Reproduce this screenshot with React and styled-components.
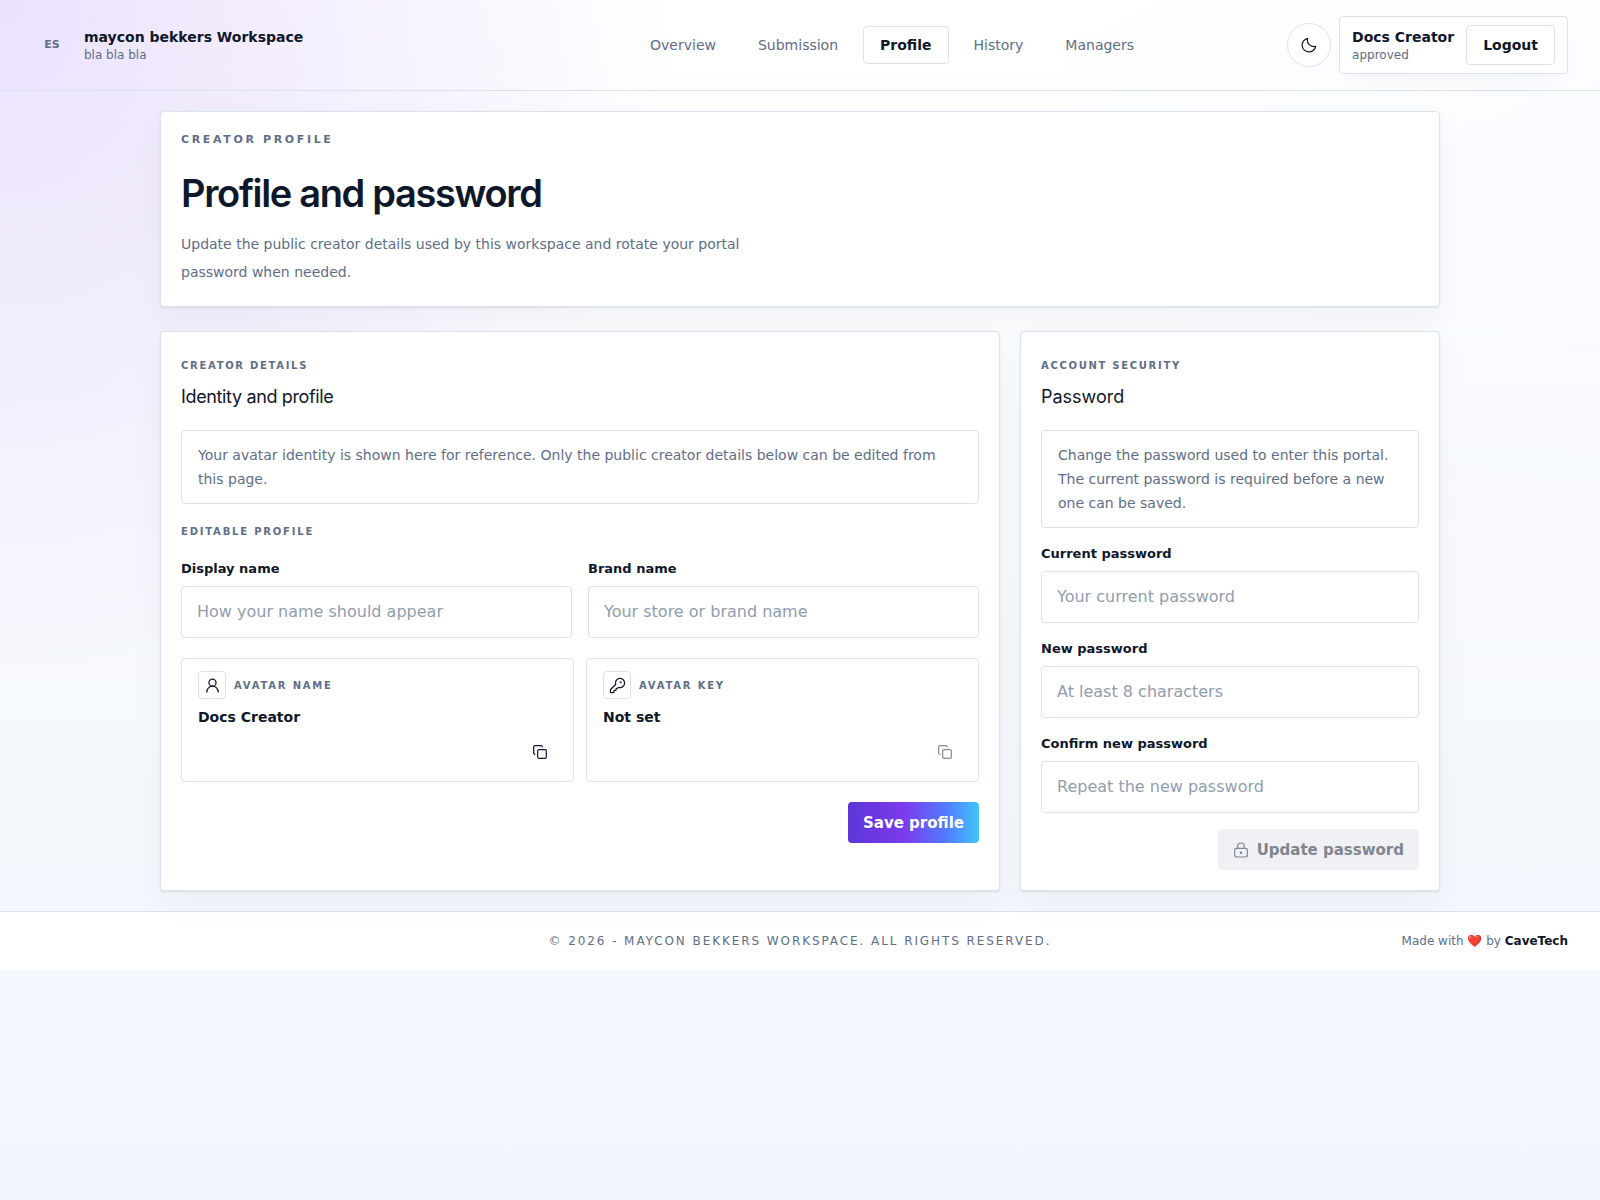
import React, { useState } from "react";
import styled, { createGlobalStyle } from "styled-components";

const GlobalStyle = createGlobalStyle`
  * {
    box-sizing: border-box;
  }
  body {
    margin: 0;
    min-height: 100vh;
    color: #0f172a;
    font-family: "DejaVu Sans", sans-serif;
    font-size: 14px;
    background:
      radial-gradient(circle at top left, rgba(124, 58, 237, 0.15), transparent 34%),
      radial-gradient(circle at top right, rgba(79, 125, 255, 0.02), transparent 30%),
      linear-gradient(180deg, #ffffff 0%, #f4f7fc 72%, #f2f5fc 100%) no-repeat;
  }
  h1, h2, p {
    margin: 0;
  }
  button, input {
    font-family: inherit;
  }
`;

const Icon = ({ size = 16, stroke = 1.8, children }) => (
  <svg
    width={size}
    height={size}
    viewBox="0 0 24 24"
    fill="none"
    stroke="currentColor"
    strokeWidth={stroke}
    strokeLinecap="round"
    strokeLinejoin="round"
    aria-hidden="true"
  >
    {children}
  </svg>
);

const MoonIcon = () => (
  <Icon size={18} stroke={1.6}>
    <path d="M20.9 13.7A9.1 9.1 0 1 1 10.3 3.1A8.5 8.5 0 0 0 20.9 13.7Z" />
  </Icon>
);

const UserIcon = () => (
  <Icon size={17}>
    <circle cx="12" cy="8" r="5" />
    <path d="M20 21a8 8 0 0 0-16 0" />
  </Icon>
);

const KeyIcon = () => (
  <Icon size={17}>
    <path d="M2.6 17.4A2 2 0 0 0 2 18.8V21a1 1 0 0 0 1 1h3a1 1 0 0 0 1-1v-1a1 1 0 0 1 1-1h1a1 1 0 0 0 1-1v-1a1 1 0 0 1 1-1h.2a2 2 0 0 0 1.4-.6l.8-.8a6.5 6.5 0 1 0-4-4z" />
    <circle cx="16.5" cy="7.5" r=".5" fill="currentColor" />
  </Icon>
);

const CopyIcon = () => (
  <Icon size={16}>
    <rect x="8.5" y="8.5" width="13" height="13" rx="2" />
    <path d="M4.5 15.5a2 2 0 0 1-2-2v-9a2 2 0 0 1 2-2h9a2 2 0 0 1 2 2" />
  </Icon>
);

const LockIcon = () => (
  <Icon size={16}>
    <rect x="2.5" y="9.5" width="19" height="13" rx="2.5" />
    <path d="M7 9.5V6.5a5 5 0 0 1 10 0v3" />
    <circle cx="12" cy="16" r="1" fill="currentColor" />
  </Icon>
);

const navItems = ["Overview", "Submission", "Profile", "History", "Managers"];

const passwordFields = [
  { id: "current", label: "Current password", placeholder: "Your current password" },
  { id: "next", label: "New password", placeholder: "At least 8 characters" },
  { id: "confirm", label: "Confirm new password", placeholder: "Repeat the new password" },
];

const Field = ({ id, label, ...rest }) => (
  <FieldBox>
    <Label htmlFor={id}>{label}</Label>
    <Input id={id} {...rest} />
  </FieldBox>
);

const AvatarCard = ({ icon, label, value, disabled }) => (
  <AvatarBox>
    <AvatarHead>
      <IconBox>{icon}</IconBox>
      <SmallCaps>{label}</SmallCaps>
    </AvatarHead>
    <AvatarValue>{value}</AvatarValue>
    <CopyButton
      type="button"
      aria-label={"Copy " + label}
      disabled={disabled}
      onClick={() => navigator.clipboard?.writeText(value)}
    >
      <CopyIcon />
    </CopyButton>
  </AvatarBox>
);

const App = () => {
  const [profile, setProfile] = useState({ display: "", brand: "" });
  const [passwords, setPasswords] = useState({ current: "", next: "", confirm: "" });

  const canUpdate =
    passwords.current !== "" &&
    passwords.next.length >= 8 &&
    passwords.next === passwords.confirm;

  const changeProfile = (e) =>
    setProfile({ ...profile, [e.target.id]: e.target.value });
  const changePassword = (e) =>
    setPasswords({ ...passwords, [e.target.id]: e.target.value });
  const submitHandler = (e) => e.preventDefault();

  return (
    <>
      <GlobalStyle />
      <Header>
        <Brand>
          <Logo>ES</Logo>
          <div>
            <StrongLine>maycon bekkers Workspace</StrongLine>
            <MutedLine>bla bla bla</MutedLine>
          </div>
        </Brand>
        <Nav>
          {navItems.map((item) => (
            <NavLink
              key={item}
              href={"#" + item.toLowerCase()}
              $active={item === "Profile"}
            >
              {item}
            </NavLink>
          ))}
        </Nav>
        <Actions>
          <ThemeButton type="button" aria-label="Dark mode">
            <MoonIcon />
          </ThemeButton>
          <Account>
            <div>
              <StrongLine>Docs Creator</StrongLine>
              <MutedLine>approved</MutedLine>
            </div>
            <LogoutButton type="button">Logout</LogoutButton>
          </Account>
        </Actions>
      </Header>

      <Main>
        <Panel>
          <Eyebrow>Creator profile</Eyebrow>
          <Title>Profile and password</Title>
          <Lead>
            Update the public creator details used by this workspace and rotate
            your portal password when needed.
          </Lead>
        </Panel>

        <Columns>
          <Panel>
            <CardLabel>Creator details</CardLabel>
            <CardTitle $tight>Identity and profile</CardTitle>
            <Form $gap={20} onSubmit={submitHandler}>
              <Notice>
                Your avatar identity is shown here for reference. Only the
                public creator details below can be edited from this page.
              </Notice>
              <SmallCaps>Editable profile</SmallCaps>
              <Pair $gap={16}>
                <Field
                  id="display"
                  label="Display name"
                  placeholder="How your name should appear"
                  value={profile.display}
                  onChange={changeProfile}
                />
                <Field
                  id="brand"
                  label="Brand name"
                  placeholder="Your store or brand name"
                  value={profile.brand}
                  onChange={changeProfile}
                />
              </Pair>
              <Pair $gap={12}>
                <AvatarCard icon={<UserIcon />} label="Avatar name" value="Docs Creator" />
                <AvatarCard icon={<KeyIcon />} label="Avatar key" value="Not set" disabled />
              </Pair>
              <SubmitButton type="submit">Save profile</SubmitButton>
            </Form>
          </Panel>

          <Panel>
            <CardLabel>Account security</CardLabel>
            <CardTitle>Password</CardTitle>
            <Form $gap={16} onSubmit={submitHandler}>
              <Notice>
                Change the password used to enter this portal. The current
                password is required before a new one can be saved.
              </Notice>
              {passwordFields.map((field) => (
                <Field
                  key={field.id}
                  type="password"
                  value={passwords[field.id]}
                  onChange={changePassword}
                  {...field}
                />
              ))}
              <SubmitButton type="submit" disabled={!canUpdate}>
                <LockIcon />
                Update password
              </SubmitButton>
            </Form>
          </Panel>
        </Columns>
      </Main>

      <Footer>
        <Copyright>© 2026 - maycon bekkers Workspace. All rights reserved.</Copyright>
        <Credit>
          Made with ❤️ by <a href="#cavetech">CaveTech</a>
        </Credit>
      </Footer>
    </>
  );
};

const Header = styled.header`
  display: flex;
  align-items: center;
  justify-content: space-between;
  padding: 16px 32px;
  border-bottom: 1px solid #d9e3f0;
`;
const Brand = styled.div`
  display: flex;
  flex: 0 1 465px;
  align-items: center;
  gap: 12px;
`;
const Logo = styled.div`
  width: 40px;
  font-size: 11px;
  font-weight: bold;
  line-height: 36px;
  text-align: center;
  color: #5e6e88;
`;
const StrongLine = styled.div`
  font-size: 14px;
  font-weight: bold;
  line-height: 20px;
  white-space: nowrap;
`;
const MutedLine = styled.div`
  font-size: 12px;
  line-height: 16px;
  color: #5e6e88;
`;
const Nav = styled.nav`
  display: flex;
  gap: 8px;
`;
const NavLink = styled.a`
  padding: 8px 16px;
  border: 1px solid ${({ $active }) => ($active ? "#d9e3f0" : "transparent")};
  border-radius: 4px;
  background: ${({ $active }) => ($active ? "#ffffff" : "transparent")};
  color: ${({ $active }) => ($active ? "#0f172a" : "#5e6e88")};
  font-weight: ${({ $active }) => ($active ? "bold" : "normal")};
  line-height: 20px;
  text-decoration: none;
`;
const Actions = styled.div`
  display: flex;
  align-items: center;
  gap: 8px;
`;
const ThemeButton = styled.button`
  display: flex;
  align-items: center;
  justify-content: center;
  width: 44px;
  height: 44px;
  padding: 0;
  border: 1px solid #d9e3f0;
  border-radius: 50%;
  background: #ffffff;
  color: #0f172a;
`;
const Account = styled.div`
  display: flex;
  align-items: center;
  gap: 12px;
  padding: 8px 12px;
  border: 1px solid #d9e3f0;
  border-radius: 4px;
  background: #ffffff;
  box-shadow: 0 12px 24px -12px rgba(15, 23, 42, 0.06);
`;
const LogoutButton = styled.button`
  height: 40px;
  padding: 0 16px;
  border: 1px solid #d9e3f0;
  border-radius: 4px;
  background: #ffffff;
  color: #0f172a;
  font-size: 14px;
  font-weight: bold;
`;

const Main = styled.main`
  display: flex;
  flex-direction: column;
  gap: 24px;
  max-width: 1280px;
  margin: 0 auto;
  padding: 20px 0;
`;
const Panel = styled.section`
  padding: 20px;
  border: 1px solid #d9e3f0;
  border-radius: 4px;
  background: #ffffff;
  box-shadow:
    0 1px 2px rgba(15, 23, 42, 0.08),
    0 12px 32px rgba(15, 23, 42, 0.04);
`;
const Eyebrow = styled.p`
  color: #5e6e88;
  font-size: 11px;
  font-weight: bold;
  letter-spacing: 0.24em;
  line-height: 16px;
  text-transform: uppercase;
`;
const Title = styled.h1`
  margin: 24px 0 16px;
  font-family: Inter, sans-serif;
  font-size: 38px;
  font-weight: 600;
  letter-spacing: -0.035em;
  line-height: 42px;
`;
const Lead = styled.p`
  max-width: 576px;
  color: #5e6e88;
  line-height: 28px;
`;
const Columns = styled.div`
  display: grid;
  grid-template-columns: 2fr 1fr;
  gap: 20px;
`;
const CardLabel = styled.p`
  color: #5e6e88;
  font-size: 10px;
  font-weight: bold;
  letter-spacing: 0.17em;
  line-height: 28px;
  text-transform: uppercase;
`;
const CardTitle = styled.h2`
  margin-bottom: 16px;
  font-family: Inter, sans-serif;
  font-size: 18px;
  font-weight: 400;
  letter-spacing: ${({ $tight }) => ($tight ? "-0.02em" : "normal")};
  line-height: 34px;
`;
const Form = styled.form`
  display: flex;
  flex-direction: column;
  gap: ${({ $gap }) => $gap}px;
`;
const Notice = styled.p`
  padding: 12px 16px;
  border: 1px solid #d9e3f0;
  border-radius: 4px;
  color: #5e6e88;
  line-height: 24px;
`;
const SmallCaps = styled.div`
  color: #5e6e88;
  font-size: 10px;
  font-weight: bold;
  letter-spacing: 0.18em;
  line-height: 15px;
  text-transform: uppercase;
`;
const Pair = styled.div`
  display: grid;
  grid-template-columns: 1fr 1fr;
  gap: ${({ $gap }) => $gap}px;
`;
const FieldBox = styled.div`
  display: flex;
  flex-direction: column;
  gap: 8px;
`;
const Label = styled.label`
  font-size: 13px;
  font-weight: bold;
  line-height: 19px;
`;
const Input = styled.input`
  width: 100%;
  height: 52px;
  padding: 0 15px 2px;
  border: 1px solid #d9e3f0;
  border-radius: 4px;
  background: #ffffff;
  color: #0f172a;
  font-size: 16px;
  &::placeholder {
    color: #919dae;
  }
`;
const AvatarBox = styled.div`
  display: flex;
  flex-direction: column;
  gap: 8px;
  padding: 12px 16px;
  border: 1px solid #d9e3f0;
  border-radius: 4px;
`;
const AvatarHead = styled.div`
  display: flex;
  align-items: center;
  gap: 8px;
`;
const IconBox = styled.span`
  display: flex;
  align-items: center;
  justify-content: center;
  width: 28px;
  height: 28px;
  border: 1px solid #d9e3f0;
  border-radius: 4px;
`;
const AvatarValue = styled.div`
  font-weight: bold;
  line-height: 20px;
`;
const CopyButton = styled.button`
  display: flex;
  align-items: center;
  justify-content: center;
  align-self: flex-end;
  width: 34px;
  height: 34px;
  padding: 0;
  border: 0;
  background: transparent;
  color: #0f172a;
  &:disabled {
    opacity: 0.5;
  }
`;
const SubmitButton = styled.button`
  display: flex;
  align-items: center;
  align-self: flex-end;
  gap: 8px;
  height: 41px;
  padding: 0 15px;
  border: 0;
  border-radius: 4px;
  background: linear-gradient(90deg, #5b36d6 0%, #7c3aed 42%, #4f7dff 76%, #41c7f7 100%);
  color: #ffffff;
  font-size: 15px;
  font-weight: bold;
  &:disabled {
    background: #f0f1f4;
    color: #80858f;
  }
`;

const Footer = styled.footer`
  display: grid;
  grid-template-columns: 1fr auto 1fr;
  align-items: center;
  padding: 20px 32px;
  border-top: 1px solid #d9e3f0;
  background: #ffffff;
  color: #5e6e88;
  font-size: 12px;
  line-height: 18px;
`;
const Copyright = styled.span`
  grid-column: 2;
  letter-spacing: 0.16em;
  text-transform: uppercase;
`;
const Credit = styled.span`
  text-align: right;
  a {
    color: #0f172a;
    font-weight: bold;
    text-decoration: none;
  }
`;

export default App;
